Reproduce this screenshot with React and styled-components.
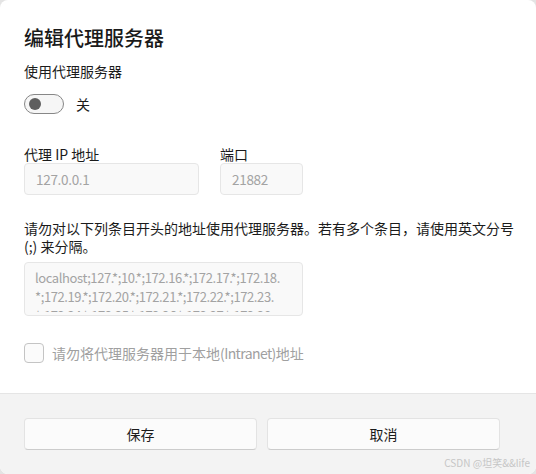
import React from 'react';
import styled, { createGlobalStyle } from 'styled-components';

const Global = createGlobalStyle`
  html, body {
    margin: 0;
    padding: 0;
    background: #e4e4e4;
  }
  body {
    font-family: "Noto Sans CJK SC", "Segoe UI", "Noto Sans", sans-serif;
    color: #1b1b1b;
  }
`;

const Dialog = styled.div`
  position: relative;
  width: 536px;
  height: 474px;
  box-sizing: border-box;
  background: #ffffff;
  border-radius: 8px;
  overflow: hidden;
  display: flex;
  flex-direction: column;
`;

const Body = styled.div`
  padding: 24px 24px 0;
  display: flex;
  flex-direction: column;
`;

const Title = styled.h1`
  margin: 0;
  font-size: 20px;
  line-height: 28px;
  font-weight: 500;
  color: #1a1a1a;
`;

const Label = styled.div`
  margin-top: ${({ gap }) => gap || 0}px;
  font-size: 14px;
  line-height: 20px;
  color: #1b1b1b;
`;

const Latin = styled.span`
  letter-spacing: ${({ tight }) => tight || -0.4}px;
`;

const ToggleRow = styled.div`
  margin-top: 13px;
  display: flex;
  align-items: center;
  gap: 12px;
  font-size: 14px;
  line-height: 20px;
`;

const Toggle = styled.div`
  width: 40px;
  height: 20px;
  box-sizing: border-box;
  border: 1px solid #878787;
  border-radius: 10px;
  background: #f6f6f6;
  display: flex;
  align-items: center;
  padding-left: 4px;
`;

const Knob = styled.span`
  width: 12px;
  height: 12px;
  border-radius: 50%;
  background: #5e5e5e;
`;

const Fields = styled.div`
  margin-top: 31px;
  display: flex;
  gap: 21px;
`;

const Field = styled.div`
  display: flex;
  flex-direction: column;
  width: ${({ w }) => w}px;
`;

const FieldLabel = styled.div`
  font-size: 14px;
  line-height: 17px;
  margin-top: 1px;
`;

const Input = styled.div`
  height: 32px;
  box-sizing: border-box;
  border: 1px solid #e6e6e6;
  border-radius: 4px;
  background: #f9f9f9;
  padding: 0 11px;
  display: flex;
  align-items: center;
  font-size: 13.5px;
  letter-spacing: -0.3px;
  color: #a3a3a3;
`;

const Hint = styled.p`
  margin: 24px 0 0;
  font-size: 14px;
  line-height: 18px;
  white-space: nowrap;
  color: #1b1b1b;
`;

const TextBox = styled.div`
  margin-top: 7px;
  width: 279px;
  height: 54px;
  box-sizing: border-box;
  border: 1px solid #e6e6e6;
  border-radius: 4px;
  background: #f9f9f9;
  padding: 5px 10px 0;
  font-size: 13px;
  line-height: 19px;
  letter-spacing: -0.4px;
  color: #a3a3a3;
`;

const TextClip = styled.div`
  height: 44px;
  overflow: hidden;
  white-space: pre;
`;

const CheckRow = styled.div`
  margin-top: 27px;
  display: flex;
  align-items: center;
  gap: 8px;
  font-size: 14px;
  line-height: 20px;
  color: #a0a0a0;
`;

const Checkbox = styled.span`
  width: 20px;
  height: 20px;
  box-sizing: border-box;
  border: 1px solid #c4c4c4;
  border-radius: 4px;
  background: #fbfbfb;
`;

const Footer = styled.div`
  margin-top: auto;
  height: 81px;
  box-sizing: border-box;
  border-top: 1px solid #e5e5e5;
  background: #f3f3f3;
  padding: 24px 0 0 24px;
  display: grid;
  grid-template-columns: 233px 233px;
  column-gap: 10px;
  align-content: start;
`;

const Button = styled.button`
  height: 32px;
  border: 1px solid #e3e3e3;
  border-bottom-color: #cccccc;
  border-radius: 4px;
  background: #fbfbfb;
  font-family: inherit;
  font-size: 14px;
  font-weight: 400;
  color: #1b1b1b;
  padding: 0;
`;

const Watermark = styled.span`
  position: absolute;
  right: 6px;
  bottom: 5px;
  font-size: 10px;
  line-height: 12px;
  color: #c6c6c6;
`;

const bypass = [
  'localhost;127.*;10.*;172.16.*;172.17.*;172.18.',
  '*;172.19.*;172.20.*;172.21.*;172.22.*;172.23.',
  '*;172.24.*;172.25.*;172.26.*;172.27.*;172.28.',
];

const App = () => (
  <>
    <Global />
    <Dialog>
      <Body>
        <Title>编辑代理服务器</Title>
        <Label gap={9}>使用代理服务器</Label>
        <ToggleRow>
          <Toggle>
            <Knob />
          </Toggle>
          <span>关</span>
        </ToggleRow>
        <Fields>
          <Field w={175}>
            <FieldLabel>代理 IP 地址</FieldLabel>
            <Input>127.0.0.1</Input>
          </Field>
          <Field w={83}>
            <FieldLabel>端口</FieldLabel>
            <Input>21882</Input>
          </Field>
        </Fields>
        <Hint>
          请勿对以下列条目开头的地址使用代理服务器。若有多个条目，请使用英文分号
          <br />
          (;) 来分隔。
        </Hint>
        <TextBox>
          <TextClip>{bypass.join('\n')}</TextClip>
        </TextBox>
        <CheckRow>
          <Checkbox />
          <span>
            请勿将代理服务器用于本地<Latin tight={-0.6}>(Intranet)</Latin>地址
          </span>
        </CheckRow>
      </Body>
      <Footer>
        <Button>保存</Button>
        <Button>取消</Button>
      </Footer>
      <Watermark>CSDN @坦笑&amp;&amp;life</Watermark>
    </Dialog>
  </>
);

export default App;
